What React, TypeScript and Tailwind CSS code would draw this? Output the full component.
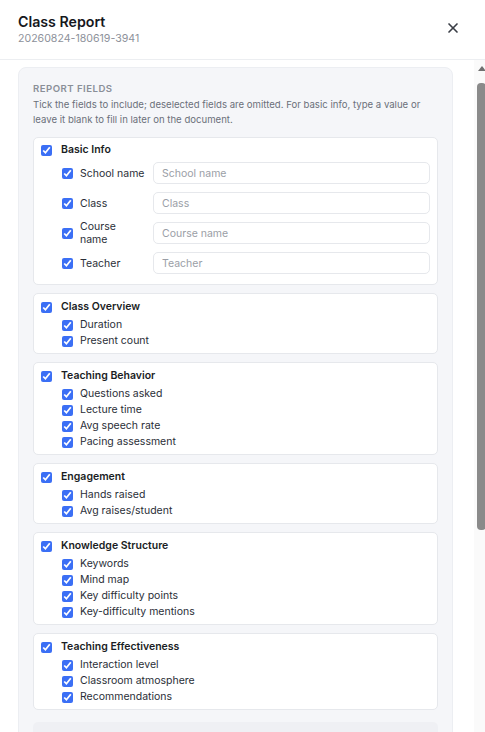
import { X } from 'lucide-react'

type Section = { title: string; items: string[] }

const basicFields = [
  { label: 'School name', placeholder: 'School name', wrap: false },
  { label: 'Class', placeholder: 'Class', wrap: false },
  { label: 'Course name', placeholder: 'Course name', wrap: true },
  { label: 'Teacher', placeholder: 'Teacher', wrap: false },
]

const sections: Section[] = [
  { title: 'Class Overview', items: ['Duration', 'Present count'] },
  {
    title: 'Teaching Behavior',
    items: ['Questions asked', 'Lecture time', 'Avg speech rate', 'Pacing assessment'],
  },
  { title: 'Engagement', items: ['Hands raised', 'Avg raises/student'] },
  {
    title: 'Knowledge Structure',
    items: ['Keywords', 'Mind map', 'Key difficulty points', 'Key-difficulty mentions'],
  },
  {
    title: 'Teaching Effectiveness',
    items: ['Interaction level', 'Classroom atmosphere', 'Recommendations'],
  },
]

function Check() {
  return <input type="checkbox" defaultChecked className="m-0 h-[11px] w-[11px] shrink-0 accent-[#3b6ff5]" />
}

function SectionCard({ section }: { section: Section }) {
  return (
    <div className="rounded-[5px] border border-[#e6e8ec] bg-white px-[7px] pb-1 pt-[5px]">
      <label className="flex h-4 items-center gap-[9px] text-[10.5px] font-semibold text-[#1a1d24]">
        <Check />
        {section.title}
      </label>
      <div className="mt-0.5 flex flex-col pl-[21px]">
        {section.items.map((item) => (
          <label key={item} className="flex h-4 items-center gap-[7px] text-[10.5px] text-[#2a2e37]">
            <Check />
            {item}
          </label>
        ))}
      </div>
    </div>
  )
}

// stand-in for the classic scrollbar seen in the screenshot
function ScrollBar() {
  return (
    <div className="flex w-[15px] shrink-0 flex-col items-center bg-[#fafafa]">
      <div className="flex h-[15px] w-full items-center justify-center pt-[2px]">
        <svg width="8" height="5" viewBox="0 0 8 5">
          <path d="M4 0 L8 5 L0 5 Z" fill="#707070" />
        </svg>
      </div>
      <div className="mt-2 h-[447px] w-[9px] rounded-[4px] bg-[#8a8a8a]" />
    </div>
  )
}

export default function App() {
  return (
    <div className="h-[732px] w-[485px] overflow-hidden bg-white" style={{ fontFamily: 'Inter, "Noto Sans", sans-serif' }}>
      <div className="flex h-[744px] w-[489px] flex-col">
        <header className="flex h-[60px] shrink-0 items-start justify-between border-b border-[#eceef1] pl-[18px] pr-[24px] pt-3">
          <div>
            <h1 className="text-[14.2px] font-semibold leading-5 text-[#15171c]">Class Report</h1>
            <p className="-mt-px text-[10.6px] leading-4 text-[#8d919a]">20260824-180619-3941</p>
          </div>
          <button className="mt-[4px] p-1 text-[#3a3e46]">
            <X size={16} strokeWidth={2.5} />
          </button>
        </header>

        <div className="flex min-h-0 flex-1">
          <div className="min-w-0 flex-1 overflow-hidden pb-5 pl-[18px] pr-[21px] pt-[7px]">
            <section className="rounded-lg border border-[#eceef2] bg-[#f5f6f9] px-[14px] pb-4 pt-[14px]">
              <h2 className="text-[9.6px] font-semibold uppercase leading-[14px] tracking-[0.05em] text-[#8a8f98]">
                Report fields
              </h2>
              <p className="mt-[1px] text-[9.6px] leading-[15px] text-[#6b707a]">
                Tick the fields to include; deselected fields are omitted. For basic info, type a value or leave it
                blank to fill in later on the document.
              </p>

              <div className="mt-[10px] flex flex-col gap-2">
                <div className="rounded-[5px] border border-[#e6e8ec] bg-white px-[7px] pb-[10px] pt-1">
                  <label className="flex h-4 items-center gap-[9px] text-[10.5px] font-semibold text-[#1a1d24]">
                    <Check />
                    Basic Info
                  </label>
                  <div className="mt-1 flex flex-col gap-2 pl-[21px]">
                    {basicFields.map((f) => (
                      <div key={f.label} className="flex h-[22px] items-center gap-2">
                        <label className="flex w-[83px] shrink-0 items-center gap-[7px] text-[10.5px] leading-[13px] text-[#2a2e37]">
                          <Check />
                          <span className={f.wrap ? 'w-[44px]' : 'whitespace-nowrap'}>{f.label}</span>
                        </label>
                        <input
                          placeholder={f.placeholder}
                          className="h-[22px] min-w-0 flex-1 rounded-[5px] border border-[#e6e8ec] bg-white px-2 text-[10.5px] text-[#2a2e37] outline-none placeholder:text-[#9a9ea6]"
                        />
                      </div>
                    ))}
                  </div>
                </div>

                {sections.map((s) => (
                  <SectionCard key={s.title} section={s} />
                ))}

                <div className="mt-[4px] rounded-[5px] bg-[#eff0f4] px-2 py-2">
                  <div className="h-[260px]" />
                </div>
              </div>
            </section>
          </div>
          <ScrollBar />
        </div>
      </div>
    </div>
  )
}
